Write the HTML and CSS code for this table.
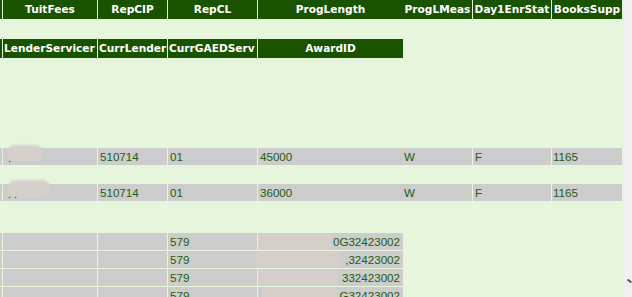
FILE: index.html
```html
<!DOCTYPE html>
<html>
<head>
<meta charset="utf-8">
<link rel="stylesheet" href="styles.css">
</head>
<body>
<div class="page">
  <div class="content">
    <div class="row head wide">
      <div class="cell edge"></div>
      <div class="cell c1">TuitFees</div>
      <div class="cell c2">RepCIP</div>
      <div class="cell c3">RepCL</div>
      <div class="cell c4">ProgLength</div>
      <div class="cell c5">ProgLMeas</div>
      <div class="cell c6">Day1EnrStat</div>
      <div class="cell c7">BooksSupp</div>
    </div>

    <div class="row head narrow gap-a">
      <div class="cell edge"></div>
      <div class="cell c1 left">LenderServicer</div>
      <div class="cell c2 left">CurrLender</div>
      <div class="cell c3 left">CurrGAEDServ</div>
      <div class="cell c4">AwardID</div>
    </div>

    <div class="row data wide gap-b">
      <div class="cell edge"></div>
      <div class="cell c1 redacted"><span class="blob b1"></span><span class="dot">.</span></div>
      <div class="cell c2">510714</div>
      <div class="cell c3">01</div>
      <div class="cell c4">45000</div>
      <div class="cell c5">W</div>
      <div class="cell c6">F</div>
      <div class="cell c7">1165</div>
    </div>

    <div class="row data wide gap-c">
      <div class="cell edge"></div>
      <div class="cell c1 redacted"><span class="blob b2"></span><span class="dot">. .</span></div>
      <div class="cell c2">510714</div>
      <div class="cell c3">01</div>
      <div class="cell c4">36000</div>
      <div class="cell c5">W</div>
      <div class="cell c6">F</div>
      <div class="cell c7">1165</div>
    </div>

    <div class="block gap-d">
      <div class="row data narrow lined">
        <div class="cell edge"></div>
        <div class="cell c1"></div>
        <div class="cell c2"></div>
        <div class="cell c3">579</div>
        <div class="cell c4 award"><span class="blob a1"></span>0G32423002</div>
      </div>
      <div class="row data narrow lined">
        <div class="cell edge"></div>
        <div class="cell c1"></div>
        <div class="cell c2"></div>
        <div class="cell c3">579</div>
        <div class="cell c4 award"><span class="blob a2"></span>,32423002</div>
      </div>
      <div class="row data narrow lined">
        <div class="cell edge"></div>
        <div class="cell c1"></div>
        <div class="cell c2"></div>
        <div class="cell c3">579</div>
        <div class="cell c4 award"><span class="blob a3"></span>332423002</div>
      </div>
      <div class="row data narrow lined">
        <div class="cell edge"></div>
        <div class="cell c1"></div>
        <div class="cell c2"></div>
        <div class="cell c3">579</div>
        <div class="cell c4 award"><span class="blob a4"></span>G32423002</div>
      </div>
    </div>
  </div>
  <div class="scrollbar"><span class="arrow"></span></div>
</div>
</body>
</html>
```

FILE: styles.css
```css
html, body {
  margin: 0;
  padding: 0;
  height: 100%;
  overflow: hidden;
}
body {
  background: #e6f6dd;
}
.page {
  display: flex;
  height: 297px;
  width: 632px;
}
.content {
  width: 624px;
  background: #e6f6dd;
  display: flex;
  flex-direction: column;
}
.scrollbar {
  width: 8px;
  background: #f0f0f0;
  position: relative;
}
.arrow {
  position: absolute;
  left: 3px;
  top: 280px;
  width: 5px;
  height: 2px;
  background: #555;
  transform: rotate(40deg);
}
.row {
  display: grid;
}
.wide {
  grid-template-columns: 3px 95px 70px 90px 145px 70px 79px 70px;
}
.narrow {
  grid-template-columns: 3px 95px 70px 90px 145px;
}
.cell {
  box-sizing: border-box;
  border-right: 1px solid #e6f6dd;
  white-space: nowrap;
  overflow: visible;
  position: relative;
}
.cell.c4, .cell.c7 {
  border-right: none;
}
.head .cell {
  height: 19px;
  line-height: 19px;
  background: #1a5300;
  color: #ffffff;
  font-family: "DejaVu Sans", Verdana, sans-serif;
  font-weight: bold;
  font-size: 10.6px;
  text-align: center;
  display: flex;
  justify-content: center;
}
.head .cell.left {
  justify-content: flex-start;
  padding-left: 1px;
}
.data .cell {
  height: 17px;
  line-height: 17px;
  background: #cccccc;
  color: #225e0c;
  font-family: "Liberation Sans", Arial, sans-serif;
  font-size: 11.6px;
  padding-left: 2px;
}
.data .cell.c5, .data .cell.c7 {
  padding-left: 1px;
}
.lined {
  border-bottom: 1px solid #e6f6dd;
}
.gap-a { margin-top: 20px; }
.gap-b { margin-top: 90px; }
.gap-c { margin-top: 19px; }
.gap-d { margin-top: 32px; }
.block {
  display: flex;
  flex-direction: column;
}
.blob {
  position: absolute;
  background: #d6d0cc;
  border-radius: 9px;
  filter: blur(1px);
}
.b1 { left: 4px; top: -3px; width: 36px; height: 16px; }
.b2 { left: 4px; top: -4px; width: 44px; height: 18px; }
.dot {
  position: relative;
  padding-left: 3px;
  line-height: 20px;
  font-size: 11px;
}
.award {
  text-align: right;
  padding-right: 3px;
}
.data .cell.award {
  padding-left: 0;
  padding-right: 3px;
}
.award .blob {
  border-radius: 2px;
  background: #d4cfca;
  filter: blur(0.6px);
  top: 0;
  height: 17px;
}
.a1 { left: 0; width: 74px; }
.a2 { left: -2px; width: 84px; }
.a3 { left: 0; width: 80px; }
.a4 { left: 4px; width: 76px; }
```
